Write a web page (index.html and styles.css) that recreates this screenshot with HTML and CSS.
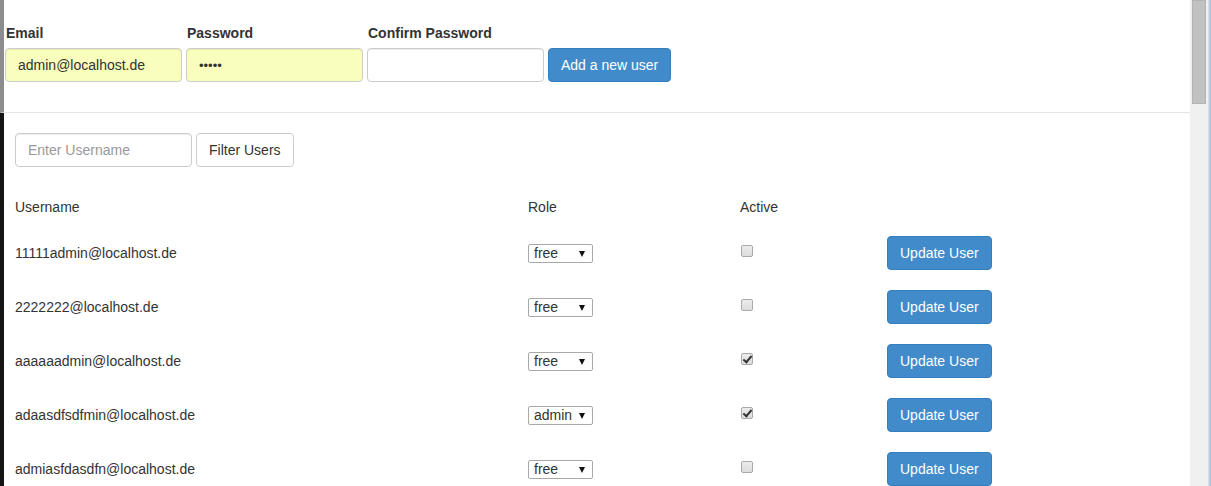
FILE: index.html
```html
<!DOCTYPE html>
<html>
<head>
<meta charset="utf-8">
<link rel="stylesheet" href="styles.css">
</head>
<body>
<div class="window">
  <div class="page">
    <section class="top">
      <form class="add-form">
        <div class="field">
          <label class="lbl">Email</label>
          <input class="control autofill" type="text" value="admin@localhost.de">
        </div>
        <div class="field">
          <label class="lbl">Password</label>
          <input class="control autofill pw" type="password" value="admin">
        </div>
        <div class="field">
          <label class="lbl">Confirm Password</label>
          <input class="control" type="password" value="">
        </div>
        <button type="button" class="btn btn-primary">Add a new user</button>
      </form>
    </section>
    <section class="bottom">
      <div class="filter">
        <input class="control" type="text" placeholder="Enter Username">
        <button type="button" class="btn btn-default">Filter Users</button>
      </div>
      <div class="table">
        <div class="row head">
          <div>Username</div>
          <div>Role</div>
          <div>Active</div>
          <div></div>
        </div>
        <div class="row">
          <div>11111admin@localhost.de</div>
          <div><span class="sel"><select><option>free</option><option>admin</option></select></span></div>
          <div><input class="chk" type="checkbox"></div>
          <div><button type="button" class="btn btn-primary">Update User</button></div>
        </div>
        <div class="row">
          <div>2222222@localhost.de</div>
          <div><span class="sel"><select><option>free</option><option>admin</option></select></span></div>
          <div><input class="chk" type="checkbox"></div>
          <div><button type="button" class="btn btn-primary">Update User</button></div>
        </div>
        <div class="row">
          <div>aaaaaadmin@localhost.de</div>
          <div><span class="sel"><select><option>free</option><option>admin</option></select></span></div>
          <div><input class="chk" type="checkbox" checked></div>
          <div><button type="button" class="btn btn-primary">Update User</button></div>
        </div>
        <div class="row">
          <div>adaasdfsdfmin@localhost.de</div>
          <div><span class="sel"><select><option>admin</option><option>free</option></select></span></div>
          <div><input class="chk" type="checkbox" checked></div>
          <div><button type="button" class="btn btn-primary">Update User</button></div>
        </div>
        <div class="row">
          <div>admiasfdasdfn@localhost.de</div>
          <div><span class="sel"><select><option>free</option><option>admin</option></select></span></div>
          <div><input class="chk" type="checkbox"></div>
          <div><button type="button" class="btn btn-primary">Update User</button></div>
        </div>
      </div>
    </section>
  </div>
  <div class="scrollbar"><div class="thumb"></div></div>
  <div class="edge"></div>
</div>
</body>
</html>
```

FILE: styles.css
```css
* { box-sizing: border-box; }
html, body { margin: 0; padding: 0; height: 100%; overflow: hidden; }
body {
  font-family: "Liberation Sans", Arial, sans-serif;
  font-size: 14px;
  line-height: 20px;
  color: #333;
  background: #fff;
}
.window {
  display: flex;
  height: 486px;
  width: 1211px;
  overflow: hidden;
}
.page {
  flex: 1;
  min-width: 0;
  display: flex;
  flex-direction: column;
  overflow: hidden;
}
.top {
  flex-shrink: 0;
  height: 113px;
  border-left: 4px solid #8c8c8c;
  border-bottom: 1px solid #e5e5e5;
  padding: 23px 0 0 1px;
  background: #fff;
}
.bottom {
  flex: 1 0 auto;
  border-left: 4px solid #141414;
  padding: 20px 0 0 11px;
  background: #fff;
}
.add-form {
  display: flex;
  align-items: flex-end;
  gap: 4px;
}
.field {
  display: flex;
  flex-direction: column;
}
.lbl {
  font-weight: bold;
  margin-bottom: 5px;
  padding-left: 1px;
}
.control {
  width: 177px;
  height: 34px;
  padding: 6px 12px;
  font-family: inherit;
  font-size: 14px;
  color: #333;
  border: 1px solid #ccc;
  border-radius: 4px;
  background: #fff;
  outline: none;
  box-shadow: inset 0 1px 1px rgba(0,0,0,0.075);
}
.control::placeholder { color: #999; }
.autofill { background: #fafebd; }
.pw { font-size: 13px; letter-spacing: 0; }
.btn {
  height: 34px;
  padding: 6px 12px;
  font-family: inherit;
  font-size: 14px;
  line-height: 20px;
  border-radius: 4px;
  border: 1px solid transparent;
  cursor: pointer;
  white-space: nowrap;
}
.btn-primary {
  background: #428bca;
  border-color: #357ebd;
  color: #fff;
}
.btn-default {
  background: #fff;
  border-color: #ccc;
  color: #333;
}
.filter {
  display: flex;
  gap: 4px;
}
.table {
  margin-top: 21px;
  width: 1170px;
}
.row {
  display: grid;
  grid-template-columns: 513px 212px 147px 1fr;
  align-items: center;
  height: 54px;
}
.row.head { height: 38px; }
.sel {
  position: relative;
  display: inline-block;
  vertical-align: middle;
}
.sel select {
  appearance: none;
  -webkit-appearance: none;
  width: 65px;
  height: 19px;
  padding: 0 0 0 5px;
  font-family: inherit;
  font-size: 14px;
  line-height: 17px;
  color: #333;
  background: #fff;
  border: 1px solid #a9a9a9;
  border-radius: 2px;
  outline: none;
  display: block;
}
.sel::after {
  content: "";
  position: absolute;
  right: 8px;
  top: 7px;
  border-left: 3.5px solid transparent;
  border-right: 3.5px solid transparent;
  border-top: 6px solid #111;
  pointer-events: none;
}
.chk {
  appearance: none;
  -webkit-appearance: none;
  margin: 0 0 5px 1px;
  width: 12px;
  height: 12px;
  border: 1px solid #a9a9a9;
  border-radius: 2px;
  background: linear-gradient(#ececec, #dcdcdc);
  position: relative;
  display: block;
}
.chk:checked::after {
  content: "";
  position: absolute;
  left: 3px;
  top: 0px;
  width: 3px;
  height: 7px;
  border: solid #333;
  border-width: 0 2px 2px 0;
  transform: rotate(40deg);
}
.scrollbar {
  width: 18px;
  flex-shrink: 0;
  background: #f0f0f0;
  padding: 0 2px 0 2px;
}
.thumb {
  height: 104px;
  background: #c1c1c1;
  border: 1px solid #b3b3b3;
}
.edge {
  width: 3px;
  flex-shrink: 0;
  background: linear-gradient(90deg, #dfe7ef, #9fb8d6);
}
```
